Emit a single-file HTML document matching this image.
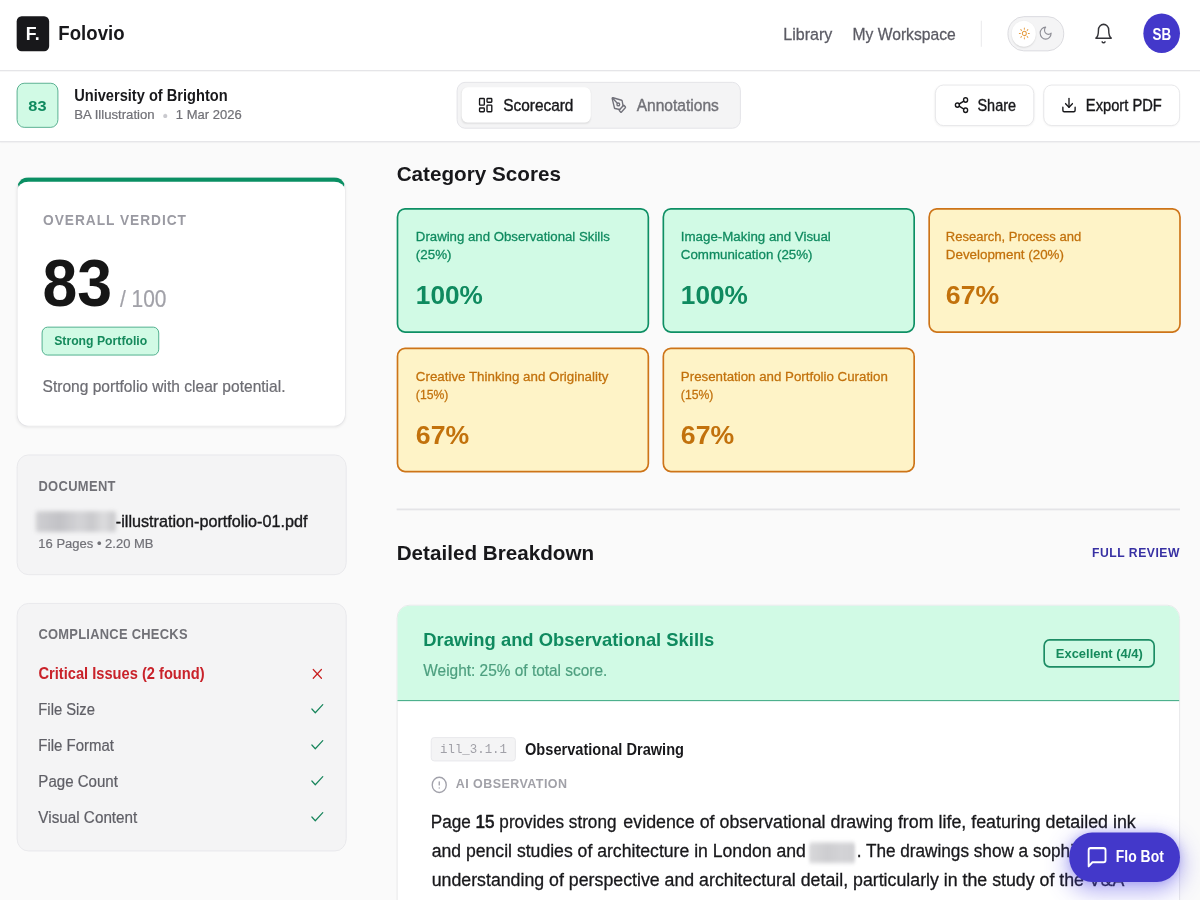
<!DOCTYPE html>
<html lang="en">
<head>
<meta charset="utf-8">
<title>Folovio – Scorecard</title>
<style>
*{box-sizing:border-box;margin:0;padding:0}
html,body{width:1200px;height:900px;overflow:hidden;background:#fafafa}
body{font-family:"Liberation Sans",sans-serif}
#stage{position:absolute;left:0;top:0;width:1440px;height:1000px;transform-origin:0 0;transform:scale(0.833333,0.9);background:#fafafa;overflow:hidden}
.t{position:absolute;white-space:pre;line-height:1;display:block}
.t b{font-weight:400;-webkit-text-stroke:0.75px currentColor}
.b{position:absolute}
svg{position:absolute;overflow:visible}
.ic{fill:none;stroke-linecap:round;stroke-linejoin:round}
.gcard{background:#d1fae5;border:2.3px solid #0e8f64;border-radius:10px}
.acard{background:#fef3c7;border:2.3px solid #cd7418;border-radius:10px}
.side{background:#f4f4f5;border:1.2px solid #e7e7ea;border-radius:14px}
</style>
</head>
<body>
<div id="stage">
<!-- header -->
<div class="b" style="left:0;top:0;width:1440px;height:78.7px;background:#fff;border-bottom:1.4px solid #dfdfe3"></div>
<div class="b" style="left:20.4px;top:17.5px;width:38.7px;height:39.5px;background:#18181b;border-radius:6px"></div>
<div class="b" style="left:1177px;top:23.3px;width:1.2px;height:29px;background:#e4e4e7"></div>
<!-- theme toggle -->
<div class="b" style="left:1209px;top:18.3px;width:67.8px;height:38.4px;border-radius:20px;background:#f4f4f5;border:1.7px solid #d6d6db"></div>
<div class="b" style="left:1213.6px;top:22.8px;width:29.6px;height:29.6px;border-radius:15px;background:#fff;box-shadow:0 1px 2px rgba(0,0,0,.12)"></div>
<svg class="ic" style="left:1222.2px;top:30.4px" width="14.4" height="14.4" viewBox="0 0 24 24" stroke="#e59a3c" stroke-width="1.9"><circle cx="12" cy="12" r="4"/><path d="M12 2v2M12 20v2M4.93 4.93l1.41 1.41M17.66 17.66l1.41 1.41M2 12h2M20 12h2M6.34 17.66l-1.41 1.41M19.07 4.93l-1.41 1.41"/></svg>
<svg class="ic" style="left:1246.4px;top:28.1px" width="17.6" height="17.6" viewBox="0 0 24 24" stroke="#8e8e96" stroke-width="1.8"><path d="M12 3a6 6 0 0 0 9 9 9 9 0 1 1-9-9Z"/></svg>
<!-- bell -->
<svg class="ic" style="left:1312.4px;top:25.2px" width="24.6" height="24.6" viewBox="0 0 24 24" stroke="#333338" stroke-width="1.7"><path d="M6 8a6 6 0 0 1 12 0c0 7 3 9 3 9H3s3-2 3-9"/><path d="M10.3 21a1.94 1.94 0 0 0 3.4 0"/></svg>
<!-- avatar -->
<div class="b" style="left:1372px;top:14.8px;width:44.4px;height:44.4px;border-radius:50%;background:#4338ca"></div>

<!-- sub header -->
<div class="b" style="left:0;top:79.6px;width:1440px;height:78.8px;background:#fff;border-bottom:1.5px solid #dcdce0;box-shadow:0 1px 2px rgba(0,0,0,.03)"></div>
<div class="b" style="left:19.8px;top:92.2px;width:49.8px;height:49.5px;border-radius:9px;background:#d1fae5;border:1.6px solid #45a583"></div>
<!-- tabs -->
<div class="b" style="left:547.8px;top:91.1px;width:341.2px;height:51.9px;border-radius:10px;background:#f4f4f5;border:1.3px solid #e1e1e5"></div>
<div class="b" style="left:553.6px;top:97px;width:155.2px;height:39.4px;border-radius:7px;background:#fff;box-shadow:0 1px 2px rgba(0,0,0,.08)"></div>
<svg class="ic" style="left:573.4px;top:107.4px" width="19.6" height="19.6" viewBox="0 0 24 24" stroke="#18181b" stroke-width="2"><rect x="3" y="3" width="7" height="9" rx="1"/><rect x="14" y="3" width="7" height="5" rx="1"/><rect x="14" y="12" width="7" height="9" rx="1"/><rect x="3" y="16" width="7" height="5" rx="1"/></svg>
<svg class="ic" style="left:732.6px;top:107.4px" width="19.6" height="19.6" viewBox="0 0 24 24" stroke="#71717a" stroke-width="2"><path d="M15.707 21.293a1 1 0 0 1-1.414 0l-1.586-1.586a1 1 0 0 1 0-1.414l5.586-5.586a1 1 0 0 1 1.414 0l1.586 1.586a1 1 0 0 1 0 1.414z"/><path d="m18 13-1.375-6.874a1 1 0 0 0-.746-.776L3.235 2.028a1 1 0 0 0-1.207 1.207L5.35 15.879a1 1 0 0 0 .776.746L13 18"/><path d="m2.3 2.3 7.286 7.286"/><circle cx="11" cy="11" r="2"/></svg>
<!-- share / export -->
<div class="b" style="left:1122px;top:93.9px;width:118.7px;height:46.6px;border-radius:10px;background:#fff;border:1.2px solid #e4e4e7;box-shadow:0 1px 2px rgba(0,0,0,.04)"></div>
<div class="b" style="left:1251.8px;top:93.9px;width:164.4px;height:46.6px;border-radius:10px;background:#fff;border:1.2px solid #e4e4e7;box-shadow:0 1px 2px rgba(0,0,0,.04)"></div>
<svg class="ic" style="left:1143.7px;top:107.4px" width="19.6" height="19.6" viewBox="0 0 24 24" stroke="#18181b" stroke-width="2"><circle cx="18" cy="5" r="3"/><circle cx="6" cy="12" r="3"/><circle cx="18" cy="19" r="3"/><path d="m8.59 13.51 6.83 3.98M15.41 6.51l-6.82 3.98"/></svg>
<svg class="ic" style="left:1272.8px;top:107.4px" width="19.6" height="19.6" viewBox="0 0 24 24" stroke="#18181b" stroke-width="2"><path d="M21 15v4a2 2 0 0 1-2 2H5a2 2 0 0 1-2-2v-4"/><path d="m7 10 5 5 5-5"/><path d="M12 15V3"/></svg>

<!-- verdict card -->
<div class="b" style="left:20.4px;top:197.1px;width:394.8px;height:276.7px;border-radius:14px;background:#fff;border:1.2px solid #e4e4e7;border-top:5.6px solid #0a8f63;box-shadow:0 1px 3px rgba(0,0,0,.06)"></div>
<div class="b" style="left:50.4px;top:363.1px;width:140.4px;height:31.7px;border-radius:7px;background:#d1fae5;border:1.7px solid #3aa57f"></div>

<!-- document card -->
<div class="b side" style="left:19.8px;top:504.9px;width:396px;height:134px"></div>
<div class="b" style="left:43px;top:568px;width:96px;height:23px;border-radius:3px;background:linear-gradient(90deg,#cfcfd2 0%,#c2c2c6 30%,#d4d4d7 55%,#c9c9cc 70%,#dcdcde 85%,#c6c6c9 100%);filter:blur(2.5px)"></div>

<!-- compliance card -->
<div class="b side" style="left:19.8px;top:669.6px;width:396px;height:276.6px"></div>
<svg class="ic" style="left:370.5px;top:739.3px" width="19.6" height="19.6" viewBox="0 0 24 24" stroke="#c81e1e" stroke-width="1.8"><path d="M18 6 6 18M6 6l12 12"/></svg>
<svg class="ic" style="left:370.5px;top:778.3px" width="19.6" height="19.6" viewBox="0 0 24 24" stroke="#15845a" stroke-width="1.8"><path d="M20 6 9 17l-5-5"/></svg>
<svg class="ic" style="left:370.5px;top:818.3px" width="19.6" height="19.6" viewBox="0 0 24 24" stroke="#15845a" stroke-width="1.8"><path d="M20 6 9 17l-5-5"/></svg>
<svg class="ic" style="left:370.5px;top:858.3px" width="19.6" height="19.6" viewBox="0 0 24 24" stroke="#15845a" stroke-width="1.8"><path d="M20 6 9 17l-5-5"/></svg>
<svg class="ic" style="left:370.5px;top:898px" width="19.6" height="19.6" viewBox="0 0 24 24" stroke="#15845a" stroke-width="1.8"><path d="M20 6 9 17l-5-5"/></svg>

<!-- category cards -->
<div class="b gcard" style="left:476.4px;top:231.1px;width:303px;height:139px"></div>
<div class="b gcard" style="left:794.6px;top:231.1px;width:303.4px;height:139px"></div>
<div class="b acard" style="left:1113.6px;top:231.1px;width:303px;height:139px"></div>
<div class="b acard" style="left:476.4px;top:386.1px;width:303px;height:139px"></div>
<div class="b acard" style="left:794.6px;top:386.1px;width:303.4px;height:139px"></div>

<div class="b" style="left:476.4px;top:565.4px;width:940px;height:1.3px;background:#e4e4e7"></div>

<!-- breakdown card -->
<div class="b" style="left:476.2px;top:671.7px;width:939.8px;height:400px;border-radius:15px;background:#fff;border:1.2px solid #e4e4e7;overflow:hidden">
  <div style="position:absolute;left:-1.2px;top:-1.2px;width:939.8px;height:107.4px;background:#d1fae5;border-bottom:1.6px solid #2f9f78"></div>
</div>
<div class="b" style="left:1252px;top:710px;width:133.6px;height:32px;border-radius:7.5px;border:2px solid #1c8c64"></div>
<div class="b" style="left:517px;top:819.4px;width:101.6px;height:26.5px;border-radius:4px;background:#f4f4f5;border:1.2px solid #e7e7ea"></div>
<svg class="ic" style="left:516.6px;top:861.6px" width="20.2" height="20.2" viewBox="0 0 24 24" stroke="#a1a1aa" stroke-width="1.9"><circle cx="12" cy="12" r="10"/><path d="M12 8v4M12 16h.01"/></svg>
<!-- blurred word in paragraph -->
<div class="b" style="left:971px;top:936px;width:55px;height:23px;border-radius:3px;background:linear-gradient(90deg,#d8d8da,#cdcdd0 40%,#d3d3d6 70%,#d0d0d3);filter:blur(2.2px)"></div>

<!-- flo bot -->
<div class="b" style="left:1283.4px;top:925px;width:132.8px;height:55px;border-radius:28px;background:#4338ca;box-shadow:0 8px 26px 3px rgba(79,70,229,.42),0 0 10px rgba(79,70,229,.25);z-index:20"></div>
<svg class="ic" style="left:1303px;top:939px;z-index:30" width="27" height="27" viewBox="0 0 24 24" stroke="#fff" stroke-width="2"><path d="M21 15a2 2 0 0 1-2 2H7l-4 4V5a2 2 0 0 1 2-2h14a2 2 0 0 1 2 2z"/></svg>

<span class="t" style="left:31.44px;top:29.00px;font-size:19.5px;font-weight:700;color:#ffffff;letter-spacing:0.000px;transform:scaleX(1.0915);transform-origin:0 0;font-family:&quot;Liberation Sans&quot;, sans-serif;">F.</span>
<span class="t" style="left:69.96px;top:27.00px;font-size:22.5px;font-weight:700;color:#18181b;letter-spacing:0.000px;transform:scaleX(0.9930);transform-origin:0 0;font-family:&quot;Liberation Sans&quot;, sans-serif;">Folovio</span>
<span class="t" style="left:939.60px;top:30.00px;font-size:17.8px;font-weight:400;color:#5b5b64;letter-spacing:0.000px;transform:scaleX(1.0817);transform-origin:0 0;font-family:&quot;Liberation Sans&quot;, sans-serif;-webkit-text-stroke:0.3px currentColor;">Library</span>
<span class="t" style="left:1023.36px;top:30.00px;font-size:17.8px;font-weight:400;color:#5b5b64;letter-spacing:0.000px;transform:scaleX(1.0561);transform-origin:0 0;font-family:&quot;Liberation Sans&quot;, sans-serif;-webkit-text-stroke:0.3px currentColor;">My Workspace</span>
<span class="t" style="left:1383.00px;top:29.00px;font-size:18.5px;font-weight:700;color:#ffffff;letter-spacing:0.000px;transform:scaleX(0.8684);transform-origin:0 0;font-family:&quot;Liberation Sans&quot;, sans-serif;">SB</span>
<span class="t" style="left:33.72px;top:110.00px;font-size:16.6px;font-weight:700;color:#0f8a5f;letter-spacing:0.000px;transform:scaleX(1.1825);transform-origin:0 0;font-family:&quot;Liberation Sans&quot;, sans-serif;">83</span>
<span class="t" style="left:89.40px;top:98.00px;font-size:17.3px;font-weight:700;color:#18181b;letter-spacing:0.000px;transform:scaleX(1.0151);transform-origin:0 0;font-family:&quot;Liberation Sans&quot;, sans-serif;">University of Brighton</span>
<span class="t" style="left:89.40px;top:120.00px;font-size:14px;font-weight:400;color:#717177;letter-spacing:0.000px;transform:scaleX(1.1284);transform-origin:0 0;font-family:&quot;Liberation Sans&quot;, sans-serif;-webkit-text-stroke:0.24px currentColor;">BA Illustration</span>
<span class="t" style="left:195.36px;top:120.00px;font-size:17px;font-weight:400;color:#c9c9ce;letter-spacing:0.000px;transform:scaleX(1.0000);transform-origin:0 0;font-family:&quot;Liberation Sans&quot;, sans-serif;-webkit-text-stroke:0.24px currentColor;">•</span>
<span class="t" style="left:210.60px;top:120.00px;font-size:14px;font-weight:400;color:#717177;letter-spacing:0.000px;transform:scaleX(1.1148);transform-origin:0 0;font-family:&quot;Liberation Sans&quot;, sans-serif;-webkit-text-stroke:0.24px currentColor;">1 Mar 2026</span>
<span class="t" style="left:603.84px;top:109.00px;font-size:17.8px;font-weight:400;color:#18181b;letter-spacing:0.000px;transform:scaleX(1.0379);transform-origin:0 0;font-family:&quot;Liberation Sans&quot;, sans-serif;-webkit-text-stroke:0.42px currentColor;">Scorecard</span>
<span class="t" style="left:763.80px;top:109.00px;font-size:17.8px;font-weight:400;color:#717177;letter-spacing:0.000px;transform:scaleX(1.0502);transform-origin:0 0;font-family:&quot;Liberation Sans&quot;, sans-serif;-webkit-text-stroke:0.42px currentColor;">Annotations</span>
<span class="t" style="left:1173.48px;top:109.00px;font-size:17.8px;font-weight:400;color:#18181b;letter-spacing:0.000px;transform:scaleX(0.9736);transform-origin:0 0;font-family:&quot;Liberation Sans&quot;, sans-serif;-webkit-text-stroke:0.42px currentColor;">Share</span>
<span class="t" style="left:1303.20px;top:109.00px;font-size:17.8px;font-weight:400;color:#18181b;letter-spacing:0.000px;transform:scaleX(0.9923);transform-origin:0 0;font-family:&quot;Liberation Sans&quot;, sans-serif;-webkit-text-stroke:0.42px currentColor;">Export PDF</span>
<span class="t" style="left:51.60px;top:236.00px;font-size:16.5px;font-weight:700;color:#9a9aa2;letter-spacing:1.147px;transform:scaleX(1.0000);transform-origin:0 0;font-family:&quot;Liberation Sans&quot;, sans-serif;">OVERALL VERDICT</span>
<span class="t" style="left:50.88px;top:277.00px;font-size:75px;font-weight:700;color:#161616;letter-spacing:0.000px;transform:scaleX(1.0010);transform-origin:0 0;font-family:&quot;Liberation Sans&quot;, sans-serif;">83</span>
<span class="t" style="left:144.00px;top:319.00px;font-size:26.5px;font-weight:400;color:#a1a1a8;letter-spacing:0.000px;transform:scaleX(0.9465);transform-origin:0 0;font-family:&quot;Liberation Sans&quot;, sans-serif;-webkit-text-stroke:0.24px currentColor;">/ 100</span>
<span class="t" style="left:64.80px;top:370.00px;font-size:15.2px;font-weight:700;color:#158a5c;letter-spacing:0.000px;transform:scaleX(0.9656);transform-origin:0 0;font-family:&quot;Liberation Sans&quot;, sans-serif;">Strong Portfolio</span>
<span class="t" style="left:51.12px;top:422.00px;font-size:17.5px;font-weight:400;color:#6d6d73;letter-spacing:0.000px;transform:scaleX(1.0668);transform-origin:0 0;font-family:&quot;Liberation Sans&quot;, sans-serif;-webkit-text-stroke:0.24px currentColor;">Strong portfolio with clear potential.</span>
<span class="t" style="left:46.08px;top:533.00px;font-size:15.5px;font-weight:700;color:#717177;letter-spacing:0.422px;transform:scaleX(1.0000);transform-origin:0 0;font-family:&quot;Liberation Sans&quot;, sans-serif;">DOCUMENT</span>
<span class="t" style="left:138.84px;top:570.00px;font-size:18.3px;font-weight:400;color:#18181b;letter-spacing:0.000px;transform:scaleX(1.0623);transform-origin:0 0;font-family:&quot;Liberation Sans&quot;, sans-serif;-webkit-text-stroke:0.42px currentColor;">-illustration-portfolio-01.pdf</span>
<span class="t" style="left:46.08px;top:597.00px;font-size:14.8px;font-weight:400;color:#717177;letter-spacing:0.000px;transform:scaleX(1.0549);transform-origin:0 0;font-family:&quot;Liberation Sans&quot;, sans-serif;-webkit-text-stroke:0.24px currentColor;">16 Pages • 2.20 MB</span>
<span class="t" style="left:46.08px;top:697.00px;font-size:15.5px;font-weight:700;color:#717177;letter-spacing:0.310px;transform:scaleX(1.0000);transform-origin:0 0;font-family:&quot;Liberation Sans&quot;, sans-serif;">COMPLIANCE CHECKS</span>
<span class="t" style="left:46.08px;top:741.00px;font-size:17.6px;font-weight:700;color:#c9222a;letter-spacing:0.000px;transform:scaleX(1.0000);transform-origin:0 0;font-family:&quot;Liberation Sans&quot;, sans-serif;">Critical Issues (2 found)</span>
<span class="t" style="left:46.08px;top:781.00px;font-size:17.3px;font-weight:400;color:#5f5f66;letter-spacing:0.000px;transform:scaleX(1.0250);transform-origin:0 0;font-family:&quot;Liberation Sans&quot;, sans-serif;-webkit-text-stroke:0.24px currentColor;">File Size</span>
<span class="t" style="left:46.08px;top:821.00px;font-size:17.3px;font-weight:400;color:#5f5f66;letter-spacing:0.000px;transform:scaleX(1.0381);transform-origin:0 0;font-family:&quot;Liberation Sans&quot;, sans-serif;-webkit-text-stroke:0.24px currentColor;">File Format</span>
<span class="t" style="left:46.08px;top:861.00px;font-size:17.3px;font-weight:400;color:#5f5f66;letter-spacing:0.000px;transform:scaleX(1.0464);transform-origin:0 0;font-family:&quot;Liberation Sans&quot;, sans-serif;-webkit-text-stroke:0.24px currentColor;">Page Count</span>
<span class="t" style="left:46.08px;top:901.00px;font-size:17.3px;font-weight:400;color:#5f5f66;letter-spacing:0.000px;transform:scaleX(1.0598);transform-origin:0 0;font-family:&quot;Liberation Sans&quot;, sans-serif;-webkit-text-stroke:0.24px currentColor;">Visual Content</span>
<span class="t" style="left:476.40px;top:183.00px;font-size:22.5px;font-weight:700;color:#18181b;letter-spacing:0.000px;transform:scaleX(1.1025);transform-origin:0 0;font-family:&quot;Liberation Sans&quot;, sans-serif;">Category Scores</span>
<span class="t" style="left:498.60px;top:256.00px;font-size:14.3px;font-weight:400;color:#0f8a5f;letter-spacing:0.000px;transform:scaleX(1.1096);transform-origin:0 0;font-family:&quot;Liberation Sans&quot;, sans-serif;-webkit-text-stroke:0.3px currentColor;">Drawing and Observational Skills</span>
<span class="t" style="left:498.60px;top:276.00px;font-size:14.3px;font-weight:400;color:#0f8a5f;letter-spacing:0.000px;transform:scaleX(1.1232);transform-origin:0 0;font-family:&quot;Liberation Sans&quot;, sans-serif;-webkit-text-stroke:0.3px currentColor;">(25%)</span>
<span class="t" style="left:498.60px;top:315.00px;font-size:28px;font-weight:700;color:#0f8a5f;letter-spacing:0.000px;transform:scaleX(1.1225);transform-origin:0 0;font-family:&quot;Liberation Sans&quot;, sans-serif;">100%</span>
<span class="t" style="left:816.96px;top:256.00px;font-size:14.3px;font-weight:400;color:#0f8a5f;letter-spacing:0.000px;transform:scaleX(1.1175);transform-origin:0 0;font-family:&quot;Liberation Sans&quot;, sans-serif;-webkit-text-stroke:0.3px currentColor;">Image-Making and Visual</span>
<span class="t" style="left:816.96px;top:276.00px;font-size:14.3px;font-weight:400;color:#0f8a5f;letter-spacing:0.000px;transform:scaleX(1.1174);transform-origin:0 0;font-family:&quot;Liberation Sans&quot;, sans-serif;-webkit-text-stroke:0.3px currentColor;">Communication (25%)</span>
<span class="t" style="left:816.96px;top:315.00px;font-size:28px;font-weight:700;color:#0f8a5f;letter-spacing:0.000px;transform:scaleX(1.1225);transform-origin:0 0;font-family:&quot;Liberation Sans&quot;, sans-serif;">100%</span>
<span class="t" style="left:1135.44px;top:256.00px;font-size:14.3px;font-weight:400;color:#c2710c;letter-spacing:0.000px;transform:scaleX(1.0925);transform-origin:0 0;font-family:&quot;Liberation Sans&quot;, sans-serif;-webkit-text-stroke:0.3px currentColor;">Research, Process and</span>
<span class="t" style="left:1135.44px;top:276.00px;font-size:14.3px;font-weight:400;color:#c2710c;letter-spacing:0.000px;transform:scaleX(1.1216);transform-origin:0 0;font-family:&quot;Liberation Sans&quot;, sans-serif;-webkit-text-stroke:0.3px currentColor;">Development (20%)</span>
<span class="t" style="left:1135.44px;top:315.00px;font-size:28px;font-weight:700;color:#c2710c;letter-spacing:0.000px;transform:scaleX(1.1412);transform-origin:0 0;font-family:&quot;Liberation Sans&quot;, sans-serif;">67%</span>
<span class="t" style="left:498.60px;top:411.00px;font-size:14.3px;font-weight:400;color:#c2710c;letter-spacing:0.000px;transform:scaleX(1.1194);transform-origin:0 0;font-family:&quot;Liberation Sans&quot;, sans-serif;-webkit-text-stroke:0.3px currentColor;">Creative Thinking and Originality</span>
<span class="t" style="left:498.60px;top:431.00px;font-size:14.3px;font-weight:400;color:#c2710c;letter-spacing:0.000px;transform:scaleX(1.0225);transform-origin:0 0;font-family:&quot;Liberation Sans&quot;, sans-serif;-webkit-text-stroke:0.3px currentColor;">(15%)</span>
<span class="t" style="left:498.60px;top:470.00px;font-size:28px;font-weight:700;color:#c2710c;letter-spacing:0.000px;transform:scaleX(1.1412);transform-origin:0 0;font-family:&quot;Liberation Sans&quot;, sans-serif;">67%</span>
<span class="t" style="left:816.96px;top:411.00px;font-size:14.3px;font-weight:400;color:#c2710c;letter-spacing:0.000px;transform:scaleX(1.1162);transform-origin:0 0;font-family:&quot;Liberation Sans&quot;, sans-serif;-webkit-text-stroke:0.3px currentColor;">Presentation and Portfolio Curation</span>
<span class="t" style="left:816.96px;top:431.00px;font-size:14.3px;font-weight:400;color:#c2710c;letter-spacing:0.000px;transform:scaleX(1.0225);transform-origin:0 0;font-family:&quot;Liberation Sans&quot;, sans-serif;-webkit-text-stroke:0.3px currentColor;">(15%)</span>
<span class="t" style="left:816.96px;top:470.00px;font-size:28px;font-weight:700;color:#c2710c;letter-spacing:0.000px;transform:scaleX(1.1412);transform-origin:0 0;font-family:&quot;Liberation Sans&quot;, sans-serif;">67%</span>
<span class="t" style="left:476.40px;top:604.00px;font-size:22.5px;font-weight:700;color:#18181b;letter-spacing:0.000px;transform:scaleX(1.1020);transform-origin:0 0;font-family:&quot;Liberation Sans&quot;, sans-serif;">Detailed Breakdown</span>
<span class="t" style="left:1310.40px;top:607.00px;font-size:14.6px;font-weight:700;color:#3730a3;letter-spacing:0.634px;transform:scaleX(1.0000);transform-origin:0 0;font-family:&quot;Liberation Sans&quot;, sans-serif;">FULL REVIEW</span>
<span class="t" style="left:507.60px;top:702.00px;font-size:19.8px;font-weight:700;color:#0f8a5f;letter-spacing:0.000px;transform:scaleX(1.1146);transform-origin:0 0;font-family:&quot;Liberation Sans&quot;, sans-serif;">Drawing and Observational Skills</span>
<span class="t" style="left:507.60px;top:737.00px;font-size:17.6px;font-weight:400;color:#4d9f7f;letter-spacing:0.000px;transform:scaleX(1.0517);transform-origin:0 0;font-family:&quot;Liberation Sans&quot;, sans-serif;-webkit-text-stroke:0.24px currentColor;">Weight: 25% of total score.</span>
<span class="t" style="left:1266.60px;top:718.00px;font-size:15.2px;font-weight:700;color:#158a5c;letter-spacing:0.000px;transform:scaleX(1.0221);transform-origin:0 0;font-family:&quot;Liberation Sans&quot;, sans-serif;">Excellent (4/4)</span>
<span class="t" style="left:528.00px;top:826.00px;font-size:15px;font-weight:400;color:#a1a1a8;letter-spacing:0.000px;transform:scaleX(0.9924);transform-origin:0 0;font-family:&quot;Liberation Mono&quot;, monospace;">ill_3.1.1</span>
<span class="t" style="left:630.00px;top:825.00px;font-size:17.6px;font-weight:700;color:#18181b;letter-spacing:0.000px;transform:scaleX(0.9957);transform-origin:0 0;font-family:&quot;Liberation Sans&quot;, sans-serif;">Observational Drawing</span>
<span class="t" style="left:546.96px;top:863.00px;font-size:15px;font-weight:700;color:#a1a1a8;letter-spacing:0.519px;transform:scaleX(1.0000);transform-origin:0 0;font-family:&quot;Liberation Sans&quot;, sans-serif;">AI OBSERVATION</span>
<span class="t" style="left:517.20px;top:903.00px;font-size:20px;font-weight:400;color:#18181b;letter-spacing:0.000px;transform:scaleX(1.0272);transform-origin:0 0;font-family:&quot;Liberation Sans&quot;, sans-serif;-webkit-text-stroke:0.34px currentColor;">Page <b>15</b> provides strong</span>
<span class="t" style="left:748.32px;top:903.00px;font-size:20px;font-weight:400;color:#18181b;letter-spacing:0.000px;transform:scaleX(1.0698);transform-origin:0 0;font-family:&quot;Liberation Sans&quot;, sans-serif;-webkit-text-stroke:0.34px currentColor;">evidence of observational drawing from life, featuring detailed ink</span>
<span class="t" style="left:517.56px;top:935.00px;font-size:20px;font-weight:400;color:#18181b;letter-spacing:0.000px;transform:scaleX(1.0572);transform-origin:0 0;font-family:&quot;Liberation Sans&quot;, sans-serif;-webkit-text-stroke:0.34px currentColor;">and pencil studies of architecture in London and</span>
<span class="t" style="left:1028.04px;top:935.00px;font-size:20px;font-weight:400;color:#18181b;letter-spacing:0.000px;transform:scaleX(1.0303);transform-origin:0 0;font-family:&quot;Liberation Sans&quot;, sans-serif;-webkit-text-stroke:0.34px currentColor;">. The drawings show a sophisticated</span>
<span class="t" style="left:517.56px;top:968.00px;font-size:20px;font-weight:400;color:#18181b;letter-spacing:0.000px;transform:scaleX(1.0651);transform-origin:0 0;font-family:&quot;Liberation Sans&quot;, sans-serif;-webkit-text-stroke:0.34px currentColor;">understanding of perspective and architectural detail, particularly in the study of the V&amp;A</span>
<span class="t" style="left:1339.20px;top:944.00px;font-size:17.6px;font-weight:700;color:#ffffff;letter-spacing:0.000px;transform:scaleX(0.9506);transform-origin:0 0;font-family:&quot;Liberation Sans&quot;, sans-serif;z-index:30;">Flo Bot</span>
</div>
</body>
</html>
